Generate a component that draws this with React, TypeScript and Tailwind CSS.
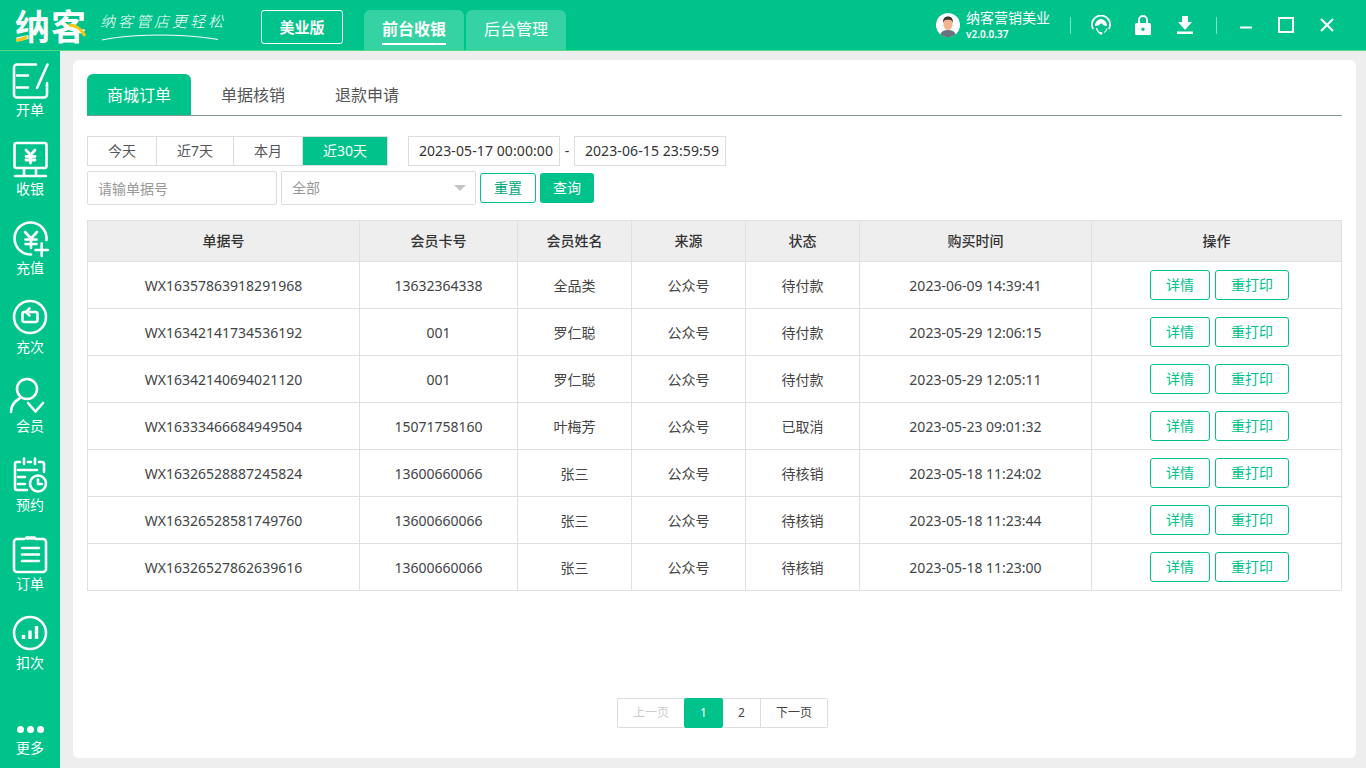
import React from 'react';

const orders = [
  ['WX16357863918291968', '13632364338', '全品类', '公众号', '待付款', '2023-06-09 14:39:41'],
  ['WX16342141734536192', '001', '罗仁聪', '公众号', '待付款', '2023-05-29 12:06:15'],
  ['WX16342140694021120', '001', '罗仁聪', '公众号', '待付款', '2023-05-29 12:05:11'],
  ['WX16333466684949504', '15071758160', '叶梅芳', '公众号', '已取消', '2023-05-23 09:01:32'],
  ['WX16326528887245824', '13600660066', '张三', '公众号', '待核销', '2023-05-18 11:24:02'],
  ['WX16326528581749760', '13600660066', '张三', '公众号', '待核销', '2023-05-18 11:23:44'],
  ['WX16326527862639616', '13600660066', '张三', '公众号', '待核销', '2023-05-18 11:23:00'],
];

const headers = ['单据号', '会员卡号', '会员姓名', '来源', '状态', '购买时间', '操作'];
const colWidths = ['w-[272px]', 'w-[158px]', 'w-[114px]', 'w-[114px]', 'w-[114px]', 'w-[232px]', 'w-[250px]'];

function Icon({ children }: { children: React.ReactNode }) {
  return (
    <svg
      viewBox="0 0 36 36"
      className="h-9 w-9 overflow-visible"
      fill="none"
      stroke="white"
      strokeWidth="2.6"
      strokeLinecap="round"
      strokeLinejoin="round"
    >
      {children}
    </svg>
  );
}

const navItems: { label: string; icon: React.ReactNode }[] = [
  {
    label: '开单',
    icon: (
      <>
        <path d="M24 2.500H5a3 3 0 0 0-3 3v27a3 3 0 0 0 3 3h27a3 3 0 0 0 3-3V21" />
        <path d="M5 13.500h11M5 25.500h11M35.500 2.500L25 26" />
      </>
    ),
  },
  {
    label: '收银',
    icon: (
      <>
        <rect x="2.500" y="2" width="32" height="25" rx="2" />
        <path d="M3 35h31M12 27v8M24 27v8" />
        <path d="M14 9l4.500 5 4.500-5M18.500 14v8M14 15.500h9M14 19h9" strokeWidth="2.800" />
      </>
    ),
  },
  {
    label: '充值',
    icon: (
      <>
        <path d="M19 34.500A16 16 0 1 1 34.500 20" />
        <path d="M13 12l6 6.500 6-6.500M19 18.500V28M13.500 19.500h11M13.500 24h11" />
        <path d="M23.500 30h12.500M29.700 23.500V36" />
      </>
    ),
  },
  {
    label: '充次',
    icon: (
      <>
        <circle cx="18" cy="18" r="16" />
        <path d="M14.500 13h-2a2 2 0 0 0-2 2v6a2 2 0 0 0 2 2h11a2 2 0 0 0 2-2v-6a2 2 0 0 0-2-2h-6" />
        <path d="M17.500 9.500L14 13l3.500 3.500" />
      </>
    ),
  },
  {
    label: '会员',
    icon: (
      <>
        <circle cx="15" cy="11" r="10" />
        <path d="M-1 34C-1 28 3 23 7.500 20.500M16 25l7.500 8.500L31 25" />
      </>
    ),
  },
  {
    label: '预约',
    icon: (
      <>
        <path d="M8 5H5a2 2 0 0 0-2 2v24a2 2 0 0 0 2 2h10M16 5h3M27 5h3a2 2 0 0 1 2 2v8" />
        <path d="M12 1.500V7M23 1.500V7M6 13h19M6 20h7M6 27h7" />
        <circle cx="26" cy="26.500" r="8" />
        <path d="M26 22.500V27h4" />
      </>
    ),
  },
  {
    label: '订单',
    icon: (
      <>
        <path d="M12 3H5a3 3 0 0 0-3 3v27a3 3 0 0 0 3 3h26a3 3 0 0 0 3-3V6a3 3 0 0 0-3-3h-7" />
        <path d="M14.500 2h8" strokeWidth="3.500" />
        <path d="M10 12h17M10 18.500h17M10 25h17" />
      </>
    ),
  },
  {
    label: '扣次',
    icon: (
      <>
        <circle cx="18" cy="18" r="16" />
        <path d="M11.500 20v4M18 15.500V24M24.500 11v13" strokeWidth="3.400" strokeLinecap="butt" />
      </>
    ),
  },
];

function Sidebar() {
  return (
    <aside className="flex w-[60px] shrink-0 flex-col items-center bg-[#00c28b] pt-[11px] text-white">
      {navItems.map((item) => (
        <div key={item.label} className="flex h-[79px] w-full flex-col items-center">
          <Icon>{item.icon}</Icon>
          <span className="mt-[2px] text-sm leading-5">{item.label}</span>
        </div>
      ))}
      <div className="mt-auto flex flex-col items-center pb-[10px]">
        <div className="flex gap-[3px]">
          <span className="h-[7px] w-[7px] rounded-full bg-white" />
          <span className="h-[7px] w-[7px] rounded-full bg-white" />
          <span className="h-[7px] w-[7px] rounded-full bg-white" />
        </div>
        <span className="mt-[5px] text-sm leading-5">更多</span>
      </div>
    </aside>
  );
}

function Logo() {
  return (
    <div className="relative w-[93px] pl-[15px] text-[35px] leading-[53px] font-bold tracking-[1px] whitespace-nowrap text-white">
      纳客
      <svg viewBox="0 0 72 30" className="absolute top-[13px] left-[15px] h-[30px] w-[72px]" fill="none">
        <path d="M1 27c4 0 8-1 11-3.500" stroke="#f5c518" strokeWidth="3" />
        <path d="M54 12c6 0 12 3 16 11" stroke="#f5c518" strokeWidth="3" />
      </svg>
    </div>
  );
}

function Slogan() {
  return (
    <div className="relative ml-[7px] h-[50px] w-[161px]">
      <div className="pt-[11px] text-[15px] leading-5 font-light tracking-[3px] whitespace-nowrap text-white italic">
        纳客管店更轻松
      </div>
      <svg viewBox="0 0 120 8" className="absolute top-[33px] left-0 h-2 w-[120px]" fill="none">
        <path d="M2 7C30 1 80 0 118 6.500" stroke="white" strokeWidth="1" />
      </svg>
    </div>
  );
}

function Avatar() {
  return (
    <svg viewBox="0 0 24 24" className="h-6 w-6">
      <circle cx="12" cy="12" r="12" fill="white" />
      <path d="M4.500 21.500c1-3.500 4-4.500 7.500-4.500s6.500 1 7.500 4.500a12 12 0 0 1-15 0z" fill="#6b7280" />
      <ellipse cx="12" cy="11" rx="4.600" ry="6" fill="#f0b48e" />
      <path d="M7.300 10C6.500 5.500 9 3.500 12 3.500S17.500 5.500 16.700 10c-.6-2.500-1.500-3.200-4.700-3.200S7.900 7.500 7.300 10z" fill="#3b3532" />
    </svg>
  );
}

function Header() {
  return (
    <header className="flex h-[51px] shrink-0 items-start border-b border-[#4fdc82] bg-[#00c28b] text-white">
      <Logo />
      <Slogan />
      <div className="mt-[10px] flex h-[34px] w-[82px] items-center justify-center rounded-[3px] border border-white text-[15px] font-bold">
        美业版
      </div>
      <nav className="mt-[10px] ml-[21px] flex gap-[2px]">
        <div className="relative flex h-10 w-[100px] items-center justify-center rounded-t-md bg-[#35d3a3] pb-[2px] text-base font-bold">
          前台收银
          <span className="absolute bottom-[5px] left-[18px] h-[2px] w-16 bg-white" />
        </div>
        <div className="flex h-10 w-[100px] items-center justify-center rounded-t-md bg-[#35d3a3] pb-[2px] text-base">
          后台管理
        </div>
      </nav>
      <div className="ml-auto flex h-[50px] items-center">
        <Avatar />
        <div className="ml-[6px] flex w-[84px] flex-col">
          <span className="text-sm leading-[18px] whitespace-nowrap">纳客营销美业</span>
          <span className="text-[10px] leading-[14px] font-semibold">v2.0.0.37</span>
        </div>
        <span className="ml-5 h-[17px] w-px bg-white/50" />
        <svg viewBox="0 0 20 20" className="ml-5 h-5 w-5" fill="none" stroke="white" strokeWidth="1.800">
          <path d="M2.200 14A9 9 0 1 1 17.800 14" />
          <path d="M4 11C4 6 8 4 10 4s6 2 6 7c-2 0-4.500-1-6-3-1 2-3 3-6 3z" fill="white" stroke="none" />
          <path d="M5.500 13c.8 3 2.500 5 4.500 5.200M16 13.500c-.4 2-1.500 3.300-3 4" strokeWidth="1.200" />
          <circle cx="10" cy="18.300" r="1.400" fill="white" stroke="none" />
        </svg>
        <svg viewBox="0 0 16 20" className="ml-6 h-5 w-4">
          <path
            fillRule="evenodd"
            d="M3 8V5a5 5 0 0 1 10 0v3h1.500A1.500 1.500 0 0 1 16 9.500v9a1.500 1.500 0 0 1-1.500 1.500h-13A1.500 1.500 0 0 1 0 18.500v-9A1.500 1.500 0 0 1 1.500 8zM5 8h6V5a3 3 0 0 0-6 0zm3 4.500a1.700 1.700 0 1 0 0 3.400 1.700 1.700 0 0 0 0-3.400z"
            fill="white"
          />
        </svg>
        <svg viewBox="0 0 16 18" className="ml-[26px] h-[18px] w-4" fill="white">
          <path d="M5 0h6v6h4l-7 8-7-8h4zM0 15.500h16V18H0z" />
        </svg>
        <span className="ml-[23px] h-[17px] w-px bg-white/50" />
        <svg viewBox="0 0 94 16" className="mr-[32px] ml-[23px] h-4 w-[94px]" fill="none" stroke="white">
          <path d="M0 10.500h12" strokeWidth="2" />
          <rect x="39" y="1" width="14" height="14" strokeWidth="2" />
          <path d="M81 2l12 12M93 2L81 14" strokeWidth="2" />
        </svg>
      </div>
    </header>
  );
}

function Filters() {
  return (
    <>
      <div className="mt-5 flex h-[30px] items-stretch text-sm text-[#555]">
        <div className="flex w-[70px] items-center justify-center border border-[#ddd]">今天</div>
        <div className="flex w-[77px] items-center justify-center border-y border-r border-[#ddd]">近7天</div>
        <div className="flex w-[69px] items-center justify-center border-y border-r border-[#ddd]">本月</div>
        <div className="flex w-[85px] items-center justify-center border-y border-r border-[#ddd] bg-[#00c28b] text-white">
          近30天
        </div>
        <div className="ml-5 flex w-[152px] items-center justify-center border border-[#ddd] pl-1 tracking-[0.1px] text-[#333]">
          2023-05-17 00:00:00
        </div>
        <span className="flex w-[14px] items-center justify-center text-[#333]">-</span>
        <div className="flex w-[152px] items-center justify-center border border-[#ddd] pl-1 tracking-[0.1px] text-[#333]">
          2023-06-15 23:59:59
        </div>
      </div>
      <div className="mt-[5px] flex h-[34px] items-center text-sm">
        <input
          placeholder="请输单据号"
          className="h-[34px] w-[190px] rounded-[2px] border border-[#ddd] px-[10px] outline-none placeholder:text-[#999]"
        />
        <div className="ml-1 flex h-[34px] w-[195px] items-center justify-between rounded-[2px] border border-[#ddd] pr-[9px] pl-[10px] text-[#999]">
          全部
          <span className="h-0 w-0 border-x-[6px] border-t-[6px] border-x-transparent border-t-[#c4c4c4]" />
        </div>
        <button className="ml-1 h-[30px] w-14 rounded-[3px] border border-[#00c28b] text-[#00a877]">重置</button>
        <button className="ml-1 h-[30px] w-[54px] rounded-[3px] bg-[#00c28b] text-white">查询</button>
      </div>
    </>
  );
}

function OrdersTable() {
  return (
    <table className="mt-[15px] w-[1254px] table-fixed border-collapse text-sm text-[#444]">
      <colgroup>
        {colWidths.map((w, i) => (
          <col key={i} className={w} />
        ))}
      </colgroup>
      <thead>
        <tr className="h-[41px] bg-[#eeeeee]">
          {headers.map((h) => (
            <th key={h} className="border border-[#e0e0e0] font-medium text-[#333]">
              {h}
            </th>
          ))}
        </tr>
      </thead>
      <tbody>
        {orders.map((row) => (
          <tr key={row[0]} className="h-[47px]">
            {row.map((cell, i) => (
              <td key={i} className="border border-[#e0e0e0] pt-[2px] text-center">
                {cell}
              </td>
            ))}
            <td className="border border-[#e0e0e0]">
              <div className="flex justify-center gap-[5px] pl-[6px] text-[#00c28b]">
                <button className="h-[30px] w-[60px] rounded-[3px] border border-[#00c28b]">详情</button>
                <button className="h-[30px] w-[74px] rounded-[3px] border border-[#00c28b]">重打印</button>
              </div>
            </td>
          </tr>
        ))}
      </tbody>
    </table>
  );
}

function Pagination() {
  return (
    <div className="mt-auto flex h-[30px] justify-center pl-4 text-xs text-[#444]">
      <div className="flex h-[30px]">
        <span className="flex w-[67px] items-center justify-center rounded-l-[2px] border-y border-l border-[#ddd] text-[#ccc]">
          上一页
        </span>
        <span className="flex w-[39px] items-center justify-center rounded-[2px] bg-[#00c28b] text-white">1</span>
        <span className="flex w-[38px] items-center justify-center border-y border-r border-[#ddd]">2</span>
        <span className="flex w-[67px] items-center justify-center rounded-r-[2px] border-y border-r border-[#ddd]">
          下一页
        </span>
      </div>
    </div>
  );
}

export default function App() {
  return (
    <div className="flex h-screen w-full flex-col overflow-hidden bg-[#eeeeee] font-['Noto_Sans','Noto_Sans_CJK_SC',sans-serif]">
      <Header />
      <div className="flex min-h-0 flex-1">
        <Sidebar />
        <main className="mt-[9px] mr-[10px] mb-[10px] ml-[13px] flex flex-1 flex-col rounded-md bg-white px-[14px] pt-[14px] pb-[30px]">
          <div className="flex h-[42px] gap-[10px] border-b border-[#7f9a90] text-base text-[#555]">
            <div className="flex h-[41px] w-[104px] items-center justify-center rounded-t-md bg-[#00c28b] text-white">
              商城订单
            </div>
            <div className="flex h-[41px] w-[104px] items-center justify-center">单据核销</div>
            <div className="flex h-[41px] w-[104px] items-center justify-center">退款申请</div>
          </div>
          <Filters />
          <OrdersTable />
          <Pagination />
        </main>
      </div>
    </div>
  );
}
